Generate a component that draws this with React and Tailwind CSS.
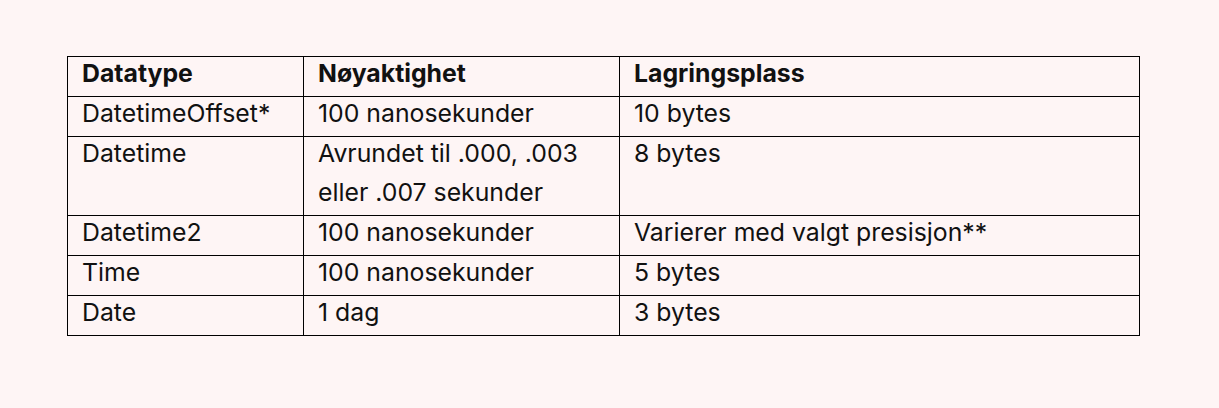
import React from 'react';

const rows = [
  [['DatetimeOffset*'], ['100 nanosekunder'], ['10 bytes']],
  [['Datetime'], ['Avrundet til .000, .003', 'eller .007 sekunder'], ['8 bytes']],
  [['Datetime2'], ['100 nanosekunder'], ['Varierer med valgt presisjon**']],
  [['Time'], ['100 nanosekunder'], ['5 bytes']],
  [['Date'], ['1 dag'], ['3 bytes']],
];

const Lines = ({ lines }) =>
  lines.map((l) => (
    <div key={l} className="whitespace-nowrap pb-[6px] leading-[33px]">
      {l}
    </div>
  ));

export default function App() {
  return (
    <div className="h-[408px] w-[1219px] bg-[#fef5f5] pt-[56px] pl-[67px] font-['Inter',sans-serif] text-[24.8px] text-[#111]">
      <table className="w-[1072px] table-fixed border-collapse">
        <colgroup>
          <col className="w-[236px]" />
          <col className="w-[316px]" />
          <col className="w-[520px]" />
        </colgroup>
        <thead>
          <tr>
            {['Datatype', 'Nøyaktighet', 'Lagringsplass'].map((h) => (
              <th key={h} className="border border-black px-[14px] text-left align-top font-bold">
                <Lines lines={[h]} />
              </th>
            ))}
          </tr>
        </thead>
        <tbody>
          {rows.map((r) => (
            <tr key={r[0][0]}>
              {r.map((c, i) => (
                <td key={i} className="border border-black px-[14px] align-top">
                  <Lines lines={c} />
                </td>
              ))}
            </tr>
          ))}
        </tbody>
      </table>
    </div>
  );
}
